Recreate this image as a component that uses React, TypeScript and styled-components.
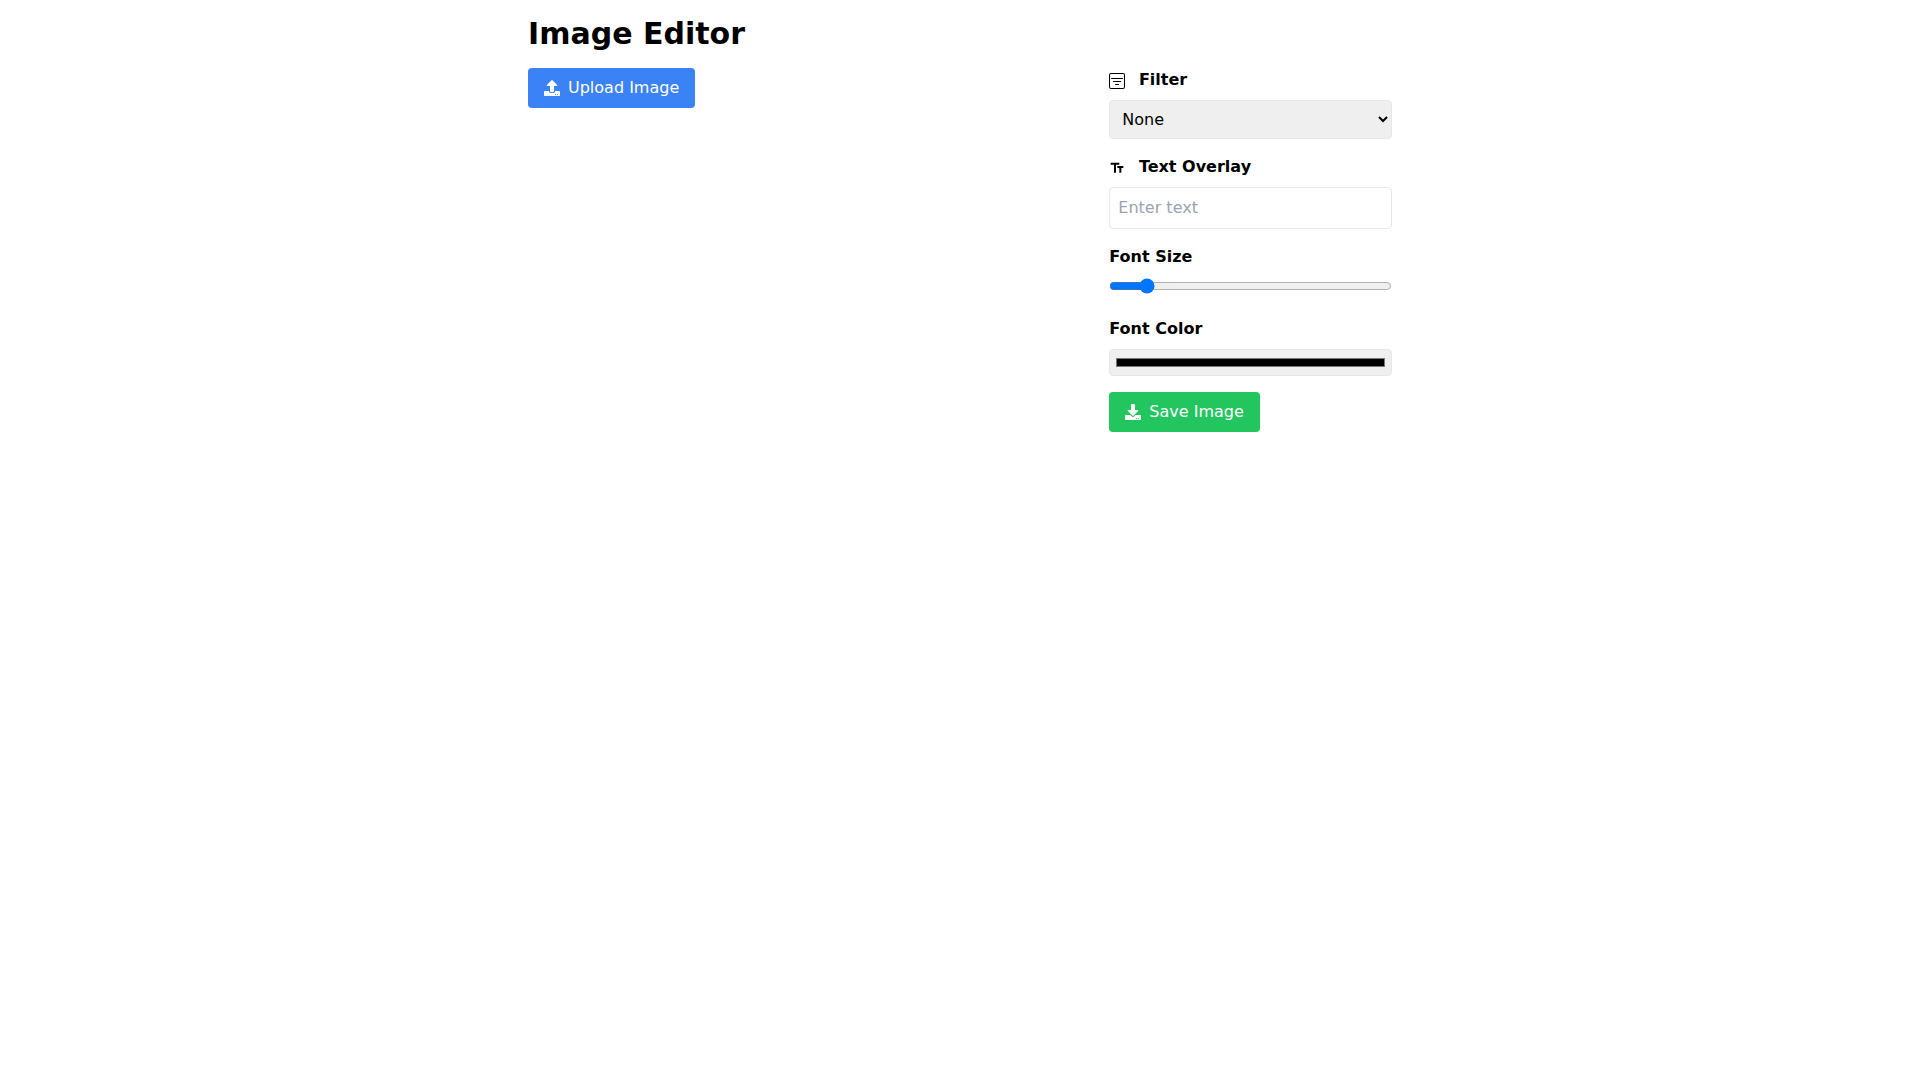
import { useRef, useState } from "react";
import styled, { createGlobalStyle } from "styled-components";
import { FaDownload, FaUpload } from "react-icons/fa";
import { BsFilterSquare } from "react-icons/bs";
import { MdTextFields } from "react-icons/md";

const GlobalStyle = createGlobalStyle`
  *, *::before, *::after {
    box-sizing: border-box;
  }

  body {
    margin: 0;
    background: #ffffff;
    color: #000000;
    font-family: "DejaVu Sans", sans-serif;
    font-size: 16px;
    line-height: 24px;
  }

  button, input, select {
    margin: 0;
    color: inherit;
    font: inherit;
  }
`;

const Page = styled.main`
  max-width: 896px;
  margin: 0 auto;
  padding: 16px;
`;

const Title = styled.h1`
  margin: 0 0 16px;
  font-size: 30px;
  line-height: 36px;
  font-weight: 700;
`;

const Columns = styled.div`
  display: flex;
  gap: 16px;
`;

const Workspace = styled.section`
  flex: 2 1 0;
  min-width: 0;
`;

const Controls = styled.section`
  flex: 1 1 0;
  min-width: 0;
`;

const Preview = styled.div<{ $filter: string }>`
  margin-top: 16px;
  filter: ${({ $filter }) => $filter};

  img {
    display: block;
    max-width: 100%;
  }
`;

const Caption = styled.p<{ $color: string }>`
  margin: 8px 0 0;
  color: ${({ $color }) => $color};
  line-height: normal;
`;

const ActionButton = styled.button<{ $color: string; $hover: string }>`
  display: flex;
  align-items: center;
  gap: 8px;
  padding: 8px 16px;
  border: 0;
  border-radius: 4px;
  background: ${({ $color }) => $color};
  color: #ffffff;
  cursor: pointer;

  &:hover {
    background: ${({ $hover }) => $hover};
  }
`;

const Field = styled.div`
  margin-bottom: 16px;
`;

const FieldLabel = styled.label`
  display: block;
  margin-bottom: 8px;
  font-weight: 700;

  svg {
    margin-right: 8px;
    vertical-align: middle;
  }
`;

const Select = styled.select`
  display: block;
  width: 100%;
  padding: 8px;
  border: 1px solid #e5e7eb;
  border-radius: 4px;
  background: #efefef;
`;

const TextInput = styled.input`
  display: block;
  width: 100%;
  padding: 8px;
  border: 1px solid #e5e7eb;
  border-radius: 4px;

  &::placeholder {
    color: #9ca3af;
    opacity: 1;
  }
`;

const SliderRow = styled.div`
  height: 24px;
`;

const Slider = styled.input`
  width: 100%;
  vertical-align: baseline;
`;

const ColorInput = styled.input`
  display: block;
  width: 100%;
  padding: 4px;
  border: 1px solid #e5e7eb;
  border-radius: 4px;
  background: #efefef;
`;

const filters = [
  { label: "None", value: "none" },
  { label: "Grayscale", value: "grayscale(100%)" },
  { label: "Sepia", value: "sepia(100%)" },
  { label: "Invert", value: "invert(100%)" },
];

export default function App() {
  const picker = useRef<HTMLInputElement>(null);
  const [image, setImage] = useState<string | null>(null);
  const [filter, setFilter] = useState("none");
  const [text, setText] = useState("");
  const [fontSize, setFontSize] = useState(20);
  const [color, setColor] = useState("#000000");

  const save = () => {
    if (!image) return;
    const source = new Image();
    source.onload = () => {
      const canvas = document.createElement("canvas");
      canvas.width = source.width;
      canvas.height = source.height;
      const context = canvas.getContext("2d");
      if (!context) return;
      context.filter = filter;
      context.drawImage(source, 0, 0);
      context.filter = "none";
      context.fillStyle = color;
      context.font = `${fontSize}px sans-serif`;
      context.fillText(text, 16, 16 + fontSize);
      const link = document.createElement("a");
      link.download = "image.png";
      link.href = canvas.toDataURL();
      link.click();
    };
    source.src = image;
  };

  return (
    <>
      <GlobalStyle />
      <Page>
        <Title>Image Editor</Title>
        <Columns>
          <Workspace>
            <input
              ref={picker}
              type="file"
              accept="image/*"
              hidden
              onChange={(event) => {
                const file = event.target.files?.[0];
                if (file) setImage(URL.createObjectURL(file));
              }}
            />
            <ActionButton
              type="button"
              $color="#3b82f6"
              $hover="#2563eb"
              onClick={() => picker.current?.click()}
            >
              <FaUpload />
              Upload Image
            </ActionButton>
            {image && (
              <>
                <Preview $filter={filter}>
                  <img src={image} alt="" />
                </Preview>
                <Caption $color={color} style={{ fontSize }}>
                  {text}
                </Caption>
              </>
            )}
          </Workspace>
          <Controls>
            <Field>
              <FieldLabel htmlFor="filter">
                <BsFilterSquare /> Filter
              </FieldLabel>
              <Select id="filter" value={filter} onChange={(e) => setFilter(e.target.value)}>
                {filters.map((item) => (
                  <option key={item.value} value={item.value}>
                    {item.label}
                  </option>
                ))}
              </Select>
            </Field>
            <Field>
              <FieldLabel htmlFor="overlay">
                <MdTextFields /> Text Overlay
              </FieldLabel>
              <TextInput
                id="overlay"
                type="text"
                placeholder="Enter text"
                value={text}
                onChange={(e) => setText(e.target.value)}
              />
            </Field>
            <Field>
              <FieldLabel htmlFor="size">Font Size</FieldLabel>
              <SliderRow>
                <Slider
                  id="size"
                  type="range"
                  min={10}
                  max={100}
                  value={fontSize}
                  onChange={(e) => setFontSize(Number(e.target.value))}
                />
              </SliderRow>
            </Field>
            <Field>
              <FieldLabel htmlFor="color">Font Color</FieldLabel>
              <ColorInput
                id="color"
                type="color"
                value={color}
                onChange={(e) => setColor(e.target.value)}
              />
            </Field>
            <ActionButton type="button" $color="#22c55e" $hover="#16a34a" onClick={save}>
              <FaDownload />
              Save Image
            </ActionButton>
          </Controls>
        </Columns>
      </Page>
    </>
  );
}
